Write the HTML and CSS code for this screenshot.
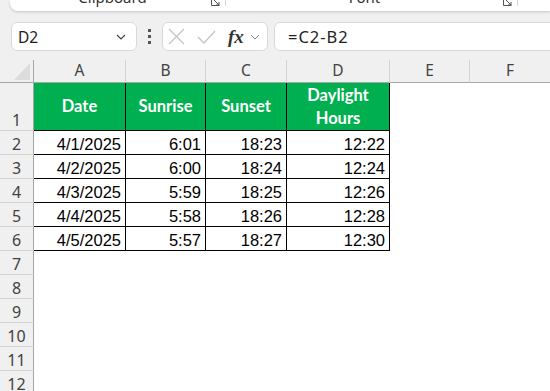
FILE: index.html
```html
<!DOCTYPE html>
<html>
<head>
    <meta charset="utf-8">
    <title>Daylight Hours - Excel</title>
    <link rel="stylesheet" href="styles.css">
</head>
<body>
    <div class="ribbon">
        <div class="group clip">
            <span class="label">Clipboard</span>
            <svg class="launcher" width="9" height="6" viewBox="0 0 9 6"><path d="M0.5 0 V5.5 H8.5 M3 0 L8 5 M5 5 H8 V2" fill="none" stroke="#555" stroke-width="1"/></svg>
        </div>
        <div class="group font">
            <span class="label">Font</span>
            <svg class="launcher" width="9" height="6" viewBox="0 0 9 6"><path d="M0.5 0 V5.5 H8.5 M3 0 L8 5 M5 5 H8 V2" fill="none" stroke="#555" stroke-width="1"/></svg>
        </div>
        <div class="group rest"></div>
    </div>

    <div class="formula-row">
        <div class="namebox">
            <span>D2</span>
            <svg class="chev" width="10" height="6" viewBox="0 0 10 6"><path d="M1 1 L5 5 L9 1" fill="none" stroke="#444" stroke-width="1.2"/></svg>
        </div>
        <div class="dots"><i></i><i></i><i></i></div>
        <div class="fxbox">
            <svg class="cancel" width="17" height="17" viewBox="0 0 17 17"><path d="M1 1 L16 16 M16 1 L1 16" stroke="#c4c4c4" stroke-width="1.3"/></svg>
            <svg class="enter" width="19" height="14" viewBox="0 0 19 14"><path d="M1 7 L7 13 L18 1" fill="none" stroke="#c4c4c4" stroke-width="1.3"/></svg>
            <span class="fx">fx</span>
            <svg class="chev small" width="10" height="6" viewBox="0 0 10 6"><path d="M1 1 L5 5 L9 1" fill="none" stroke="#888" stroke-width="1"/></svg>
        </div>
        <div class="formula">=C2-B2</div>
    </div>

    <div class="sheet">
        <div class="corner"><svg width="16" height="17" viewBox="0 0 16 17"><path d="M16 0 V17 H0 Z" fill="#dcdcdc"/></svg></div>
        <div class="colhead">A</div>
        <div class="colhead">B</div>
        <div class="colhead">C</div>
        <div class="colhead">D</div>
        <div class="colhead">E</div>
        <div class="colhead">F</div>

        <div class="rowhead">1</div>
        <div class="cell head">Date</div>
        <div class="cell head">Sunrise</div>
        <div class="cell head">Sunset</div>
        <div class="cell head">Daylight<br>Hours</div>
        <div class="blank"></div>
        <div class="blank"></div>

        <div class="rowhead">2</div>
        <div class="cell">4/1/2025</div>
        <div class="cell">6:01</div>
        <div class="cell">18:23</div>
        <div class="cell">12:22</div>
        <div class="blank"></div>
        <div class="blank"></div>

        <div class="rowhead">3</div>
        <div class="cell">4/2/2025</div>
        <div class="cell">6:00</div>
        <div class="cell">18:24</div>
        <div class="cell">12:24</div>
        <div class="blank"></div>
        <div class="blank"></div>

        <div class="rowhead">4</div>
        <div class="cell">4/3/2025</div>
        <div class="cell">5:59</div>
        <div class="cell">18:25</div>
        <div class="cell">12:26</div>
        <div class="blank"></div>
        <div class="blank"></div>

        <div class="rowhead">5</div>
        <div class="cell">4/4/2025</div>
        <div class="cell">5:58</div>
        <div class="cell">18:26</div>
        <div class="cell">12:28</div>
        <div class="blank"></div>
        <div class="blank"></div>

        <div class="rowhead">6</div>
        <div class="cell">4/5/2025</div>
        <div class="cell">5:57</div>
        <div class="cell">18:27</div>
        <div class="cell">12:30</div>
        <div class="blank"></div>
        <div class="blank"></div>

        <div class="rowhead">7</div><div class="empty"></div>
        <div class="rowhead">8</div><div class="empty"></div>
        <div class="rowhead">9</div><div class="empty"></div>
        <div class="rowhead">10</div><div class="empty"></div>
        <div class="rowhead">11</div><div class="empty"></div>
        <div class="rowhead">12</div><div class="empty"></div>
    </div>
</body>
</html>
```

FILE: styles.css
```css
body {
    margin: 0;
    background: #f0f0f0;
    font-family: "Noto Sans", sans-serif;
    width: 550px;
    height: 391px;
    overflow: hidden;
}

/* ribbon edge at the top */
.ribbon {
    display: flex;
    margin-left: 10px;
    height: 11px;
    background: #fff;
    border-radius: 0 0 0 8px;
    box-shadow: 0 1px 3px rgba(0, 0, 0, 0.18);
    overflow: hidden;
}

.group {
    display: flex;
    align-items: flex-start;
    border-right: 1px solid #d6d6d6;
    height: 6px;
}

.clip { width: 215px; }
.font { width: 291px; }
.rest { border: none; flex: 1; }

.label {
    flex: 1;
    text-align: center;
    font-size: 15px;
    line-height: 16px;
    margin-top: -11px;
    color: #333;
}

.clip .label { padding-left: 4px; }

.launcher {
    margin-right: 5px;
}

/* name box + formula bar */
.formula-row {
    display: flex;
    align-items: center;
    height: 29px;
    margin-top: 11px;
    padding-left: 11px;
}

.namebox, .fxbox, .formula {
    box-sizing: border-box;
    height: 29px;
    background: #fff;
    border: 1px solid #d9d9d9;
    border-radius: 6px;
    display: flex;
    align-items: center;
}

.namebox {
    width: 126px;
    padding: 0 10px 0 6px;
    font-size: 15.5px;
    color: #222;
}

.namebox .chev {
    margin-left: auto;
}

.dots {
    width: 25px;
    display: flex;
    flex-direction: column;
    align-items: center;
    gap: 3px;
}

.dots i {
    width: 3px;
    height: 3px;
    background: #555;
}

.fxbox {
    width: 106px;
    padding-left: 5px;
}

.enter { margin-left: 12px; }

.fx {
    margin-left: 12px;
    font-family: "Liberation Serif", serif;
    font-style: italic;
    font-weight: bold;
    font-size: 19px;
    color: #333;
}

.chev.small { margin-left: 6px; }

.formula {
    flex: 1;
    margin-left: 6px;
    margin-right: -20px;
    padding-left: 13px;
    font-size: 16.5px;
    letter-spacing: 1px;
    color: #222;
}

/* the sheet grid */
.sheet {
    display: grid;
    grid-template-columns: 34px 92px 80px 81px 103px 80px 81px;
    grid-template-rows: 23px 48px repeat(11, 24px);
    margin-top: 9px;
}

.corner, .colhead, .rowhead {
    box-sizing: border-box;
    background: #f0f0f0;
    color: #424242;
}

.corner {
    border-right: 1px solid #a6a6a6;
    border-bottom: 1px solid #a6a6a6;
    display: flex;
    justify-content: flex-end;
    align-items: flex-end;
    padding: 0 3px 2px 0;
}

.colhead {
    border-right: 1px solid #d4d4d4;
    border-bottom: 1px solid #a6a6a6;
    display: flex;
    justify-content: center;
    align-items: center;
    padding-bottom: 3px;
    font-size: 15.5px;
}

.rowhead {
    border-right: 1px solid #a6a6a6;
    border-bottom: 1px solid #d4d4d4;
    display: flex;
    justify-content: center;
    align-items: flex-end;
    font-size: 16px;
    line-height: 20px;
}

.cell {
    box-sizing: border-box;
    background: #fff;
    border-right: 1px solid #000;
    border-bottom: 1px solid #000;
    display: flex;
    justify-content: flex-end;
    align-items: flex-end;
    padding: 0 4px 0 0;
    font-family: "Liberation Sans", Arial, sans-serif;
    font-size: 16.5px;
    line-height: 19px;
    color: #000;
}

.cell.head {
    background: #00b050;
    color: #fff;
    justify-content: center;
    align-items: center;
    text-align: center;
    padding: 0;
    font-family: Lato, sans-serif;
    font-weight: bold;
    line-height: 23px;
}

.blank {
    background: #fff;
}

.empty {
    grid-column: 2 / 8;
    background: #fff;
}
```
